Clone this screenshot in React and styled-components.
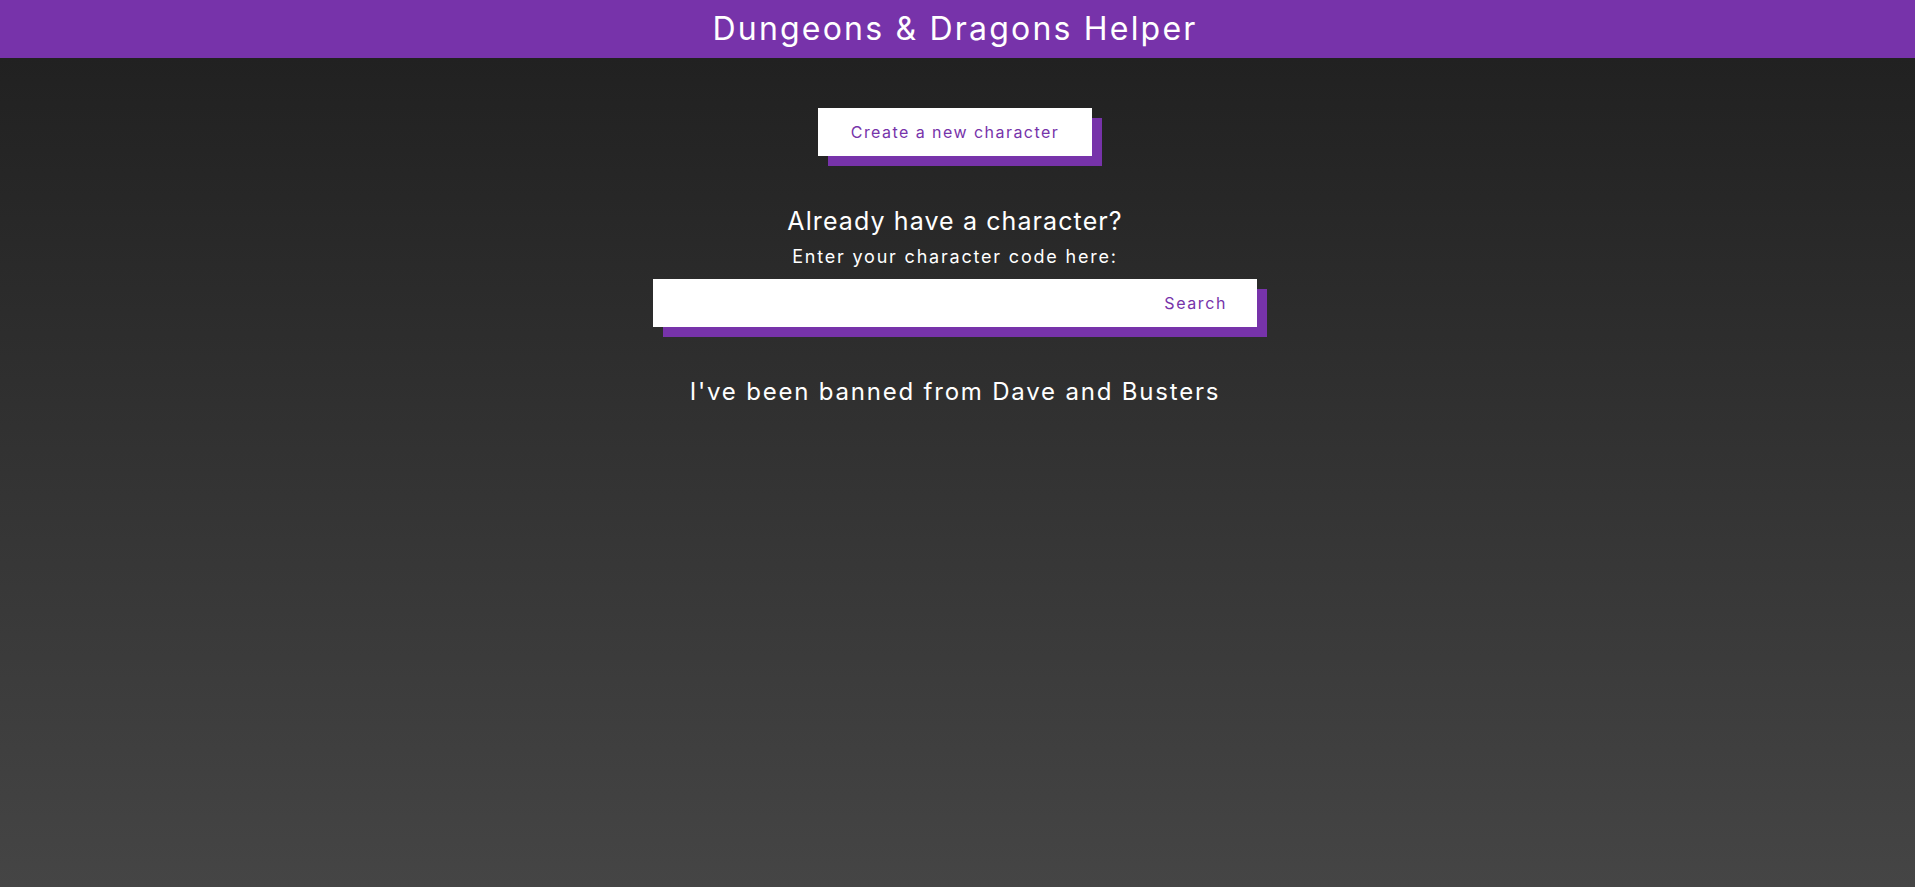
import React from "react";
import styled, { createGlobalStyle } from "styled-components";

const purple = "#7733aa";

const GlobalStyle = createGlobalStyle`
  html, body {
    margin: 0;
    padding: 0;
    background: #454545;
  }
  body {
    font-family: Inter, "Noto Sans", "DejaVu Sans", sans-serif;
    color: #ffffff;
  }
  * { box-sizing: border-box; }
`;

const Page = styled.div`
  display: flex;
  flex-direction: column;
  min-height: 100vh;
`;

const Header = styled.header`
  height: 58px;
  background: ${purple};
  display: flex;
  align-items: center;
  justify-content: center;
  padding-right: 5px;
`;

const Title = styled.h1`
  margin: 0;
  font-size: 32px;
  line-height: 58px;
  font-weight: 400;
  letter-spacing: 2.2px;
  color: #fff;
`;

const Main = styled.main`
  flex: 1;
  background: linear-gradient(to bottom, #212121 0%, #454545 100%);
  display: flex;
  flex-direction: column;
  align-items: center;
  padding: 50px 5px 0 0;
`;

const ShadowButton = styled.button`
  height: 48px;
  padding: 0 33px;
  border: none;
  background: #fff;
  color: ${purple};
  font-family: inherit;
  font-size: 16px;
  letter-spacing: 1.45px;
  box-shadow: 10px 10px 0 ${purple};
  cursor: pointer;
`;

const Heading = styled.h2`
  margin: ${(p) => p.$top || 0}px 0 0;
  font-size: ${(p) => p.$size}px;
  line-height: ${(p) => p.$lh}px;
  font-weight: ${(p) => p.$weight || 400};
  letter-spacing: ${(p) => p.$ls || 0}px;
  color: #fff;
`;

const SearchForm = styled.form`
  margin-top: 11px;
  width: 604px;
  height: 48px;
  display: flex;
  align-items: stretch;
  background: #fff;
  box-shadow: 10px 10px 0 ${purple};
`;

const SearchInput = styled.input`
  flex: 1;
  min-width: 0;
  border: none;
  outline: none;
  background: transparent;
  padding: 0 16px;
  font-family: inherit;
  font-size: 16px;
`;

const SearchButton = styled.button`
  border: none;
  background: transparent;
  color: ${purple};
  font-family: inherit;
  font-size: 16px;
  letter-spacing: 1.6px;
  padding: 0 30px 0 16px;
  cursor: pointer;
`;

export default function App() {
  return (
    <>
      <GlobalStyle />
      <Page>
        <Header>
          <Title>Dungeons &amp; Dragons Helper</Title>
        </Header>
        <Main>
          <ShadowButton type="button">Create a new character</ShadowButton>
          <Heading $top={50} $size={25} $lh={30} $ls={1.1}>
            Already have a character?
          </Heading>
          <Heading as="p" $top={10} $size={18} $lh={22} $ls={1.8}>
            Enter your character code here:
          </Heading>
          <SearchForm onSubmit={(e) => e.preventDefault()}>
            <SearchInput type="text" aria-label="Character code" />
            <SearchButton type="submit">Search</SearchButton>
          </SearchForm>
          <Heading as="h3" $top={50} $size={24} $lh={30} $ls={1.8}>
            I've been banned from Dave and Busters
          </Heading>
        </Main>
      </Page>
    </>
  );
}
